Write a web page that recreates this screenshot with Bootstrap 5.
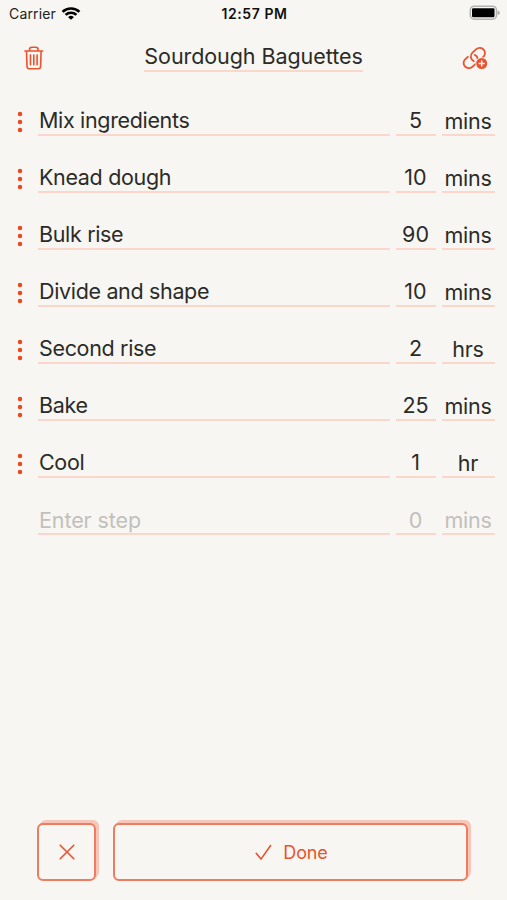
<!DOCTYPE html>
<html lang="en">
<head>
<meta charset="utf-8">
<meta name="viewport" content="width=device-width, initial-scale=1">
<title>Sourdough Baguettes</title>
<link rel="stylesheet" href="https://cdn.jsdelivr.net/npm/bootstrap@5.3.0/dist/css/bootstrap.min.css">
<style>
body{background:#f8f6f2;color:#2b2b28;font-family:Inter,"Liberation Sans",sans-serif;--accent:#e9532f;--line:#fad6cb}
svg{display:block}
.screen{height:900px;overflow:hidden}
.status{height:28px;padding:0 7px 2px 9px;font-size:14px;color:#222}
.status>div{flex:1 1 0}
.carrier{letter-spacing:.15px;margin-right:5px}
.clock{font-weight:600;color:#111;letter-spacing:.55px}
.topbar{height:60px;padding:0 19px 0 24px;color:var(--accent)}
.title{font-size:21.5px;line-height:26px;padding-bottom:1px;border-bottom:2px solid var(--line);color:#2b2b28;letter-spacing:-.07px;font-weight:400;margin:-2px 0 0 1px}
.steps{padding:17px 12px 0 0}
.step{height:57px;font-size:21.5px;line-height:26px;align-items:flex-start}
.grip{width:38px;padding:6px 0 0 16.5px}
.field{height:31px;padding-top:2px;border-bottom:2px solid var(--line);white-space:nowrap}
.label{padding-left:1px;letter-spacing:-.34px}
.amount{width:40px;padding-right:1px}
.unit{width:53px;padding-top:3px;letter-spacing:-.25px;padding-right:1px}
.gap-field{gap:6px}
.pending{color:#c1c0bc}
.pending .field{padding-top:3px}
.pending .label{letter-spacing:-.1px}
.actions{padding:0 39px 19px 37px;gap:17px}
.key{height:58px;border:2px solid #ee7c61;border-radius:6px;background:#f8f6f2;color:var(--accent);box-shadow:1px -1px 0 #f9c5b8,2px -2px 0 #f9c5b8,3px -3px 0 #f9c5b8;font-size:18px;padding:0}
.key:hover{background:#f8f6f2;color:var(--accent);border-color:#ee7c61}
.key-close{width:59px}
.done{margin-left:11px;letter-spacing:-.15px}
.check{margin-left:2px}
</style>
</head>
<body>
<main class="screen d-flex flex-column">
  <div class="status d-flex align-items-center">
    <div class="d-flex align-items-center"><span class="carrier">Carrier</span>
      <svg width="20" height="15" viewBox="1 0 20 16" preserveAspectRatio="none" fill="none" stroke="#000" stroke-width="2.7"><path d="M2.6 6.2a12 12 0 0 1 16.8 0M5.6 9.4a7.7 7.7 0 0 1 10.8 0"/><path d="M11 14.6 8.1 11.9a4.2 4.2 0 0 1 5.8 0z" fill="#000" stroke="none"/></svg>
    </div>
    <span class="clock">12:57 PM</span>
    <div class="d-flex justify-content-end">
      <svg width="31" height="16" viewBox="0 0 31 16"><rect x="1.3" y="1.2" width="26.2" height="13" rx="4" fill="#f8f6f2" stroke="#b3b2af" stroke-width="1.5"/><rect x="3" y="3.2" width="22.5" height="9" rx="1.2"/><path d="M28.7 5.4q2.2.6 2.2 2.3t-2.2 2.3z" fill="#aaa"/></svg>
    </div>
  </div>
  <header class="topbar d-flex align-items-center justify-content-between">
    <svg width="20" height="24" viewBox="0 0 20 24" fill="none" stroke="currentColor" stroke-width="1.6" stroke-linecap="round" stroke-linejoin="round"><path d="M.9 5h17.8M5.5 4.8V3.5q0-2.3 2.3-2.3h4q2.3 0 2.3 2.3v1.3M2.5 5.2l.5 15.3q.1 2.2 2.2 2.2h9.2q2.1 0 2.2-2.2l.5-15.3M6.500 9v9.700M9.800 9v9.700M13.100 9v9.700"/></svg>
    <h1 class="title">Sourdough Baguettes</h1>
    <svg width="26" height="24" viewBox="0 0 26 24" fill="none" stroke="currentColor" stroke-width="1.8" stroke-linecap="round"><g transform="translate(12.300 12) rotate(-42)"><path d="M4 5.200H7.400A5.200 5.200 0 0 0 7.400-5.200H2.200A5.200 5.200 0 0 0-2.500 2"/><path d="M-4-5.200H-7.400A5.200 5.200 0 0 0-7.400 5.200H-2.200A5.200 5.200 0 0 0 2.500-2"/></g><circle cx="19.700" cy="17.500" r="6.300" fill="#f8f6f2" stroke="none"/><circle cx="19.700" cy="17.500" r="5.500" fill="currentColor" stroke="none"/><path d="M17.200 17.500h5M19.700 15v5" stroke="#f8f6f2" stroke-width="1.500"/></svg>
  </header>
  <section class="steps flex-grow-1" id="steps"></section>
  <footer class="actions d-flex">
    <button class="btn key key-close d-flex align-items-center justify-content-center" aria-label="Cancel"><svg width="16" height="16" viewBox="0 0 16 16" fill="none" stroke="currentColor" stroke-width="1.6" stroke-linecap="round"><path d="m1.200 1.200 13.600 13.600m0-13.600L1.200 14.800"/></svg></button>
    <button class="btn key flex-grow-1 d-flex align-items-center justify-content-center"><svg class="check" width="17" height="17" viewBox="0 0 17 17" fill="none" stroke="currentColor" stroke-width="1.6" stroke-linecap="round" stroke-linejoin="round"><path d="m1.200 9.300 4.800 5.800L15.600 1.500"/></svg><span class="done">Done</span></button>
  </footer>
</main>
<script>
const steps=[["Mix ingredients","5","mins"],["Knead dough","10","mins"],["Bulk rise","90","mins"],["Divide and shape","10","mins"],["Second rise","2","hrs"],["Bake","25","mins"],["Cool","1","hr"],["Enter step","0","mins"]];
const grip='<svg width="6" height="22" viewBox="0 0 6 22" fill="#e84a22"><circle cx="3" cy="3" r="2.25"/><circle cx="3" cy="11" r="2.25"/><circle cx="3" cy="19" r="2.25"/></svg>';
document.getElementById("steps").innerHTML=steps.map(([n,a,u],i)=>{
  const last=i===steps.length-1;
  return `<div class="step d-flex ${last?"pending":""}"><div class="grip flex-shrink-0">${last?"":grip}</div><div class="d-flex flex-grow-1 gap-field"><div class="field label flex-grow-1">${n}</div><div class="field amount text-center">${a}</div><div class="field unit text-center">${u}</div></div></div>`;
}).join("");
</script>
<script src="https://cdn.jsdelivr.net/npm/bootstrap@5.3.0/dist/js/bootstrap.bundle.min.js"></script>
</body>
</html>
